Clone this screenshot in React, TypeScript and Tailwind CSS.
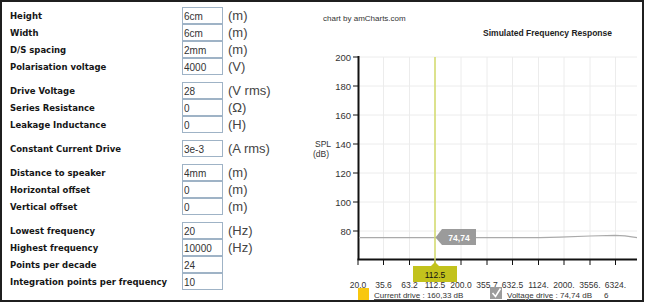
import React from 'react'

type Row = { label: string; value: string; unit?: string }

const groups: Row[][] = [
  [
    { label: 'Height', value: '6cm', unit: '(m)' },
    { label: 'Width', value: '6cm', unit: '(m)' },
    { label: 'D/S spacing', value: '2mm', unit: '(m)' },
    { label: 'Polarisation voltage', value: '4000', unit: '(V)' },
  ],
  [
    { label: 'Drive Voltage', value: '28', unit: '(V rms)' },
    { label: 'Series Resistance', value: '0', unit: '(Ω)' },
    { label: 'Leakage Inductance', value: '0', unit: '(H)' },
  ],
  [{ label: 'Constant Current Drive', value: '3e-3', unit: '(A rms)' }],
  [
    { label: 'Distance to speaker', value: '4mm', unit: '(m)' },
    { label: 'Horizontal offset', value: '0', unit: '(m)' },
    { label: 'Vertical offset', value: '0', unit: '(m)' },
  ],
  [
    { label: 'Lowest frequency', value: '20', unit: '(Hz)' },
    { label: 'Highest frequency', value: '10000', unit: '(Hz)' },
    { label: 'Points per decade', value: '24' },
    { label: 'Integration points per frequency', value: '10' },
  ],
]

const yTicks = [
  { v: '200', y: 57 },
  { v: '180', y: 86 },
  { v: '160', y: 115 },
  { v: '140', y: 144 },
  { v: '120', y: 173 },
  { v: '100', y: 202 },
  { v: '80', y: 231 },
]

const xTicks = [
  { v: '20.0', x: 358 },
  { v: '35.6', x: 383.5 },
  { v: '63.2', x: 409.5 },
  { v: '112.5', x: 435 },
  { v: '200.0', x: 461 },
  { v: '355.7', x: 487 },
  { v: '632.5', x: 512.5 },
  { v: '1124.', x: 538.5 },
  { v: '2000.', x: 564 },
  { v: '3556.', x: 590 },
  { v: '6324.', x: 615.5 },
]

function ParamRow({ row }: { row: Row }) {
  return (
    <div className="flex h-[17px] items-center">
      <span className="w-[172px] pt-[2px] font-['DejaVu_Sans',sans-serif] text-[8.5px] font-bold text-[#161616]">
        {row.label}
      </span>
      <input
        readOnly
        value={row.value}
        className="h-[17px] w-[41px] border border-[#9fb3c6] bg-white pl-[1px] pt-[1px] font-['Liberation_Sans',sans-serif] text-[10px] text-[#333] outline-none"
      />
      {row.unit && (
        <span className="ml-[5px] font-['Liberation_Sans',sans-serif] text-[13px] leading-none text-[#444]">
          {row.unit}
        </span>
      )}
    </div>
  )
}

function Chart() {
  const font = { fontFamily: '"Liberation Sans", Arial, sans-serif' }
  return (
    <svg width={337} height={298} viewBox="305 2 337 298" style={font}>
      <text x={323} y={21} fontSize={8} fill="#333">chart by amCharts.com</text>
      <text x={612} y={36} fontSize={8.5} fontWeight="bold" fill="#222" textAnchor="end">
        Simulated Frequency Response
      </text>

      {/* grid */}
      {yTicks.map((t) => (
        <line key={t.v} x1={359} x2={637} y1={t.y} y2={t.y} stroke="#ececec" strokeWidth={1} />
      ))}
      {xTicks.slice(1).map((t) => (
        <line key={t.v} x1={t.x} x2={t.x} y1={57} y2={259} stroke="#ececec" strokeWidth={1} />
      ))}

      {/* y axis */}
      <line x1={358.5} x2={358.5} y1={56} y2={260} stroke="#111" strokeWidth={2} />
      {yTicks.map((t) => (
        <g key={t.v}>
          <line x1={353} x2={358} y1={t.y} y2={t.y} stroke="#111" strokeWidth={1} />
          <text x={351} y={t.y + 3.5} fontSize={9.5} fill="#333" textAnchor="end">{t.v}</text>
        </g>
      ))}
      <text x={315} y={147} fontSize={8.5} fill="#333">SPL</text>
      <text x={313} y={157} fontSize={8.5} fill="#333">(dB)</text>

      {/* x axis */}
      <line x1={357.5} x2={637} y1={259.5} y2={259.5} stroke="#111" strokeWidth={2} />
      {xTicks.map((t) => (
        <g key={t.v}>
          <line x1={t.x} x2={t.x} y1={260} y2={265} stroke="#111" strokeWidth={1} />
          <text x={t.x} y={288} fontSize={8.5} fill="#333" textAnchor="middle">{t.v}</text>
        </g>
      ))}

      {/* data */}
      <path
        d="M359 237.7 L540 237.7 L560 237.2 L590 236 L615 235.3 L625 235.8 L637 237.6"
        fill="none"
        stroke="#aaa"
        strokeWidth={1.2}
      />

      {/* cursor */}
      <line x1={435} x2={435} y1={57} y2={263} stroke="#d3db6a" strokeWidth={1.5} />
      <path d="M413 266 L431 266 L435 262 L439 266 L457 266 L457 282 L413 282 Z" fill="#c2c21c" />
      <text x={435} y={277.5} fontSize={8.5} fill="#111" textAnchor="middle">112.5</text>

      <path d="M435.5 237.5 L442 229 L476 229 L476 245 L442 245 Z" fill="#9b9b9b" />
      <text x={459} y={240.5} fontSize={8.5} fontWeight="bold" fill="#fff" textAnchor="middle">74,74</text>

      {/* legend */}
      <rect x={358} y={288} width={11} height={12} fill="#f8c70f" />
      <text x={374} y={298} fontSize={8} fill="#333">
        <tspan textDecoration="underline">Current drive</tspan>
        <tspan> : 160,33 dB</tspan>
      </text>
      <rect x={490} y={287} width={12} height={12} fill="#9c9c9c" />
      <path d="M492.5 293 L495.5 296.5 L500.5 288.5" fill="none" stroke="#fff" strokeWidth={1.6} />
      <text x={507} y={298} fontSize={8} fill="#333">
        <tspan textDecoration="underline">Voltage drive</tspan>
        <tspan> : 74,74 dB</tspan>
      </text>
      <text x={604} y={298} fontSize={8} fill="#333">6</text>
    </svg>
  )
}

export default function App() {
  return (
    <div className="h-[305px] w-[645px] bg-white">
      <div className="flex h-[302px] w-[644px] border-2 border-[#1f1f1f] bg-white">
        <div className="flex w-[303px] flex-col gap-[7px] pl-[8px] pt-[5px]">
          {groups.map((g, i) => (
            <div key={i} className="flex flex-col">
              {g.map((r) => (
                <ParamRow key={r.label} row={r} />
              ))}
            </div>
          ))}
        </div>
        <Chart />
      </div>
    </div>
  )
}
